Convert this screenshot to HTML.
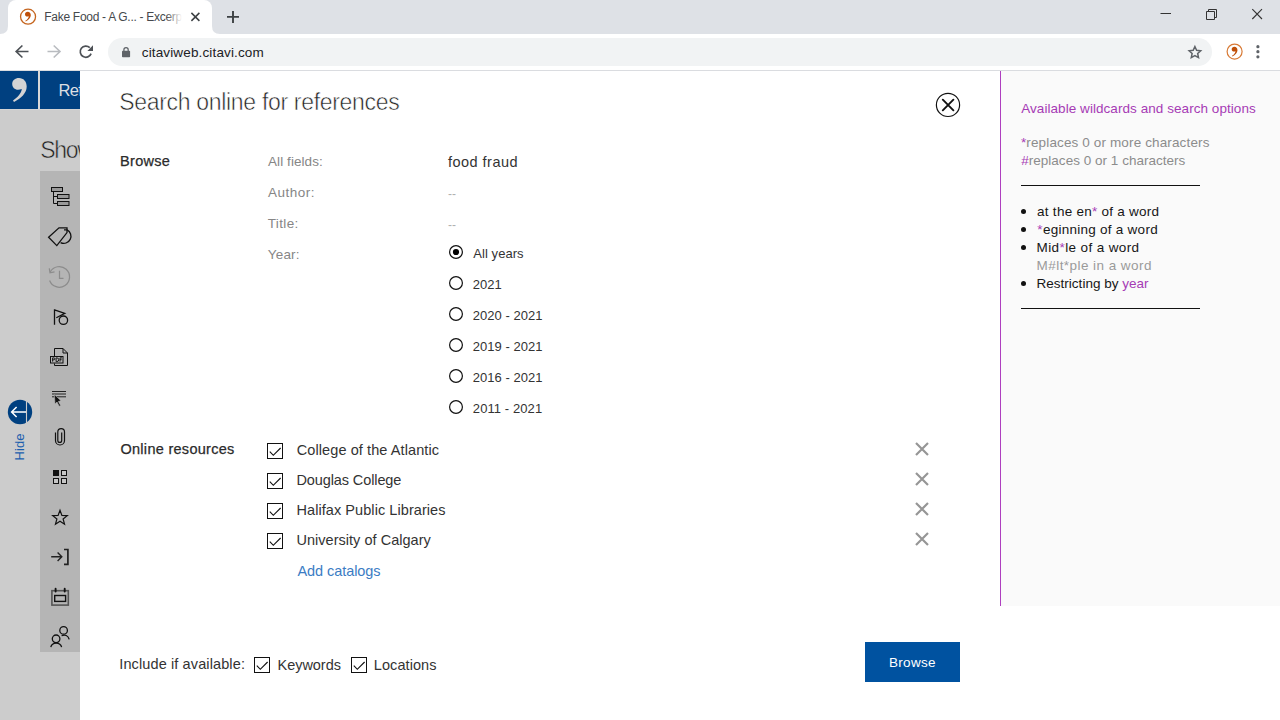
<!DOCTYPE html>
<html><head><meta charset="utf-8"><title>Search online for references</title>
<style>
*{box-sizing:border-box;margin:0;padding:0}
html,body{width:1280px;height:720px;overflow:hidden;background:#fff;font-family:"Liberation Sans",sans-serif;}
.t{position:absolute;white-space:nowrap;line-height:1}
.a{position:absolute}
svg{position:absolute;overflow:visible}
#tabbar{left:0;top:0;width:1280px;height:34px;background:#dee1e6}
#tab{left:8px;top:0;width:204px;height:34px;background:#fff;border-radius:8px 8px 0 0}
#toolbar{left:0;top:34px;width:1280px;height:36px;background:#fff}
#tbline{left:0;top:70px;width:1280px;height:1px;background:#dadce0}
#omni{left:108px;top:38px;width:1104px;height:28px;border-radius:14px;background:#f1f3f4}
#page{left:0;top:71px;width:1280px;height:649px;background:#cccccc}
#dialog{left:80px;top:71px;width:1200px;height:649px;background:#fff}
#rpanel{left:1000px;top:71px;width:280px;height:535px;background:#fafafa;border-left:1px solid #ae3fbf}
#side{left:40px;top:171px;width:40px;height:481px;background:#b5b5b5}
.blue{top:71px;height:38px;background:#004080}
.cb{width:16px;height:16px;border:1px solid #111;background:#fff}
.rd{width:14px;height:14px;border:1px solid #111;border-radius:50%;background:#fff}
.hr{height:1px;background:#111;left:1021px;width:179px}
.bul{width:5px;height:5px;border-radius:50%;background:#111;left:1021px}

</style></head><body>
<div class="a" id="tabbar"></div><div class="a" id="tab"></div>
<div class="a" id="toolbar"></div><div class="a" id="omni"></div><div class="a" id="tbline"></div>
<div class="a" id="page"></div>
<div class="a blue" style="left:0;width:38px"></div>
<div class="a blue" style="left:40px;width:40px"></div>
<div class="a" id="gapline" style="left:0;top:109px;width:80px;height:1px;background:#d4d4d4"></div>
<div class="a" style="left:38px;top:71px;width:2px;height:38px;background:#d8d8d8"></div>
<div class="a" id="side"></div>
<svg class="ov" width="80" height="720" viewBox="0 0 80 720" style="left:0;top:0">
<!-- big comma logo -->
<path id="bigcomma" d="M12.2 84 C12.2 80.5 15 78 19 78 C23.5 78 26.7 81.5 26.7 86.5 C26.7 93 21 98.5 14 102 L13 100.5 C17.5 97.5 21.3 93.5 21.8 89 C20.5 89.6 19.3 89.8 18 89.8 C14.8 89.8 12.2 87.3 12.2 84Z" fill="#d4d4d4"/>
<!-- hide button -->
<circle cx="20" cy="412" r="12.2" fill="#004080"/>
<path d="M26.5 399 V425" stroke="#cccccc" stroke-width="1.1"/>
<path d="M26 412 H11.8 M16.6 407 L11.6 412 L16.6 417" stroke="#fff" stroke-width="1.5" fill="none"/>
<!-- 1 tree -->
<g stroke="#111" stroke-width="1" fill="#999">
<rect x="51.5" y="187.5" width="11" height="4"/>
<rect x="57.5" y="194.5" width="11.5" height="4"/>
<rect x="57.5" y="201.5" width="11.5" height="4"/>
<path d="M53.5 191.5 V203.5 H57.5 M53.5 196.5 H57.5" fill="none"/>
</g>
<!-- 2 tag -->
<path d="M48.6 237.3 L59 227.8 H67 V232.6 L56.8 245.6 Z" stroke="#111" stroke-width="1.3" fill="none" stroke-linejoin="miter"/>
<path d="M64 229.8 H67 A6.9 6.9 0 1 1 60.6 242.6" stroke="#111" stroke-width="1.3" fill="none"/>
<!-- 3 history (disabled) -->
<g stroke="#8c8c8c" stroke-width="1.25" fill="none">
<path d="M50.2 272 A10.3 10.3 0 1 1 49.6 280.5"/>
<path d="M49.3 268.3 L50 272.8 L54.5 271.8"/>
<path d="M59.5 270.8 V278.3 H63.5"/>
</g>
<!-- 4 flag -->
<g stroke="#111" stroke-width="1.3" fill="none">
<path d="M54.5 309.3 V324.8 M54.5 309.8 L64.8 313.3 L56.3 317.8"/>
<circle cx="63.4" cy="320.2" r="4.2"/>
</g>
<!-- 5 pdf -->
<g stroke="#111" stroke-width="1" fill="none">
<path d="M54.5 356 V348.5 H63 L67.5 353 V365.5 H54.5 V363.5"/>
<path d="M63 348.5 V353 H67.5" />
<rect x="50.5" y="356.5" width="12.5" height="6.5" fill="#b5b5b5"/>
</g>
<path d="M52.6 361.6 V357.9 H53.9 a0.95 0.95 0 0 1 0 1.9 H52.6 M56.1 357.9 V361.6 H56.9 a1.85 1.85 0 0 0 0 -3.7 Z M60 361.6 V357.9 H62 M60 359.7 H61.6" stroke="#111" stroke-width="0.95" fill="none"/>
<!-- 6 lines + cursor -->
<g stroke="#111" stroke-width="1" fill="none">
<path d="M52 391.5 H66 M52 394 H66 M52 396.8 H66" stroke-width="0.9"/>
</g>
<path d="M54.4 394.6 L55 404 L57 402 L59.2 406.2 L60.6 405.4 L58.4 401.4 L61 400.8Z" fill="#111" stroke="#b5b5b5" stroke-width="0.6"/>
<!-- 7 paperclip -->
<path d="M61.7 432.6 V440.5 a1.95 1.95 0 0 1 -3.9 0 V432 a3.35 3.35 0 0 1 6.7 0 V440.5 a4.5 4.5 0 0 1 -9 0 V432.6" stroke="#111" stroke-width="1.2" fill="none"/>
<!-- 8 grid -->
<rect x="53" y="470" width="6" height="6" fill="#111"/>
<g stroke="#111" stroke-width="1" fill="#c6c6c6">
<rect x="61.5" y="470.5" width="5" height="5"/>
<rect x="53.5" y="478.5" width="5" height="5"/>
<rect x="61.5" y="478.5" width="5" height="5"/>
</g>
<!-- 9 star -->
<path d="M60 510.3 L61.9 515.4 L67.3 515.6 L63.1 519 L64.5 524.2 L60 521.2 L55.5 524.2 L56.9 519 L52.7 515.6 L58.1 515.4Z" stroke="#111" stroke-width="1.2" fill="none"/>
<!-- 10 arrow bracket -->
<g stroke="#222" stroke-width="1.3" fill="none">
<path d="M51.2 556.8 H61.6 M57.6 552.6 L61.8 556.8 L57.6 561" stroke-width="1.4"/>
<path d="M64 549.5 H67.9 V564.3 H64" stroke-width="1.7"/>
</g>
<!-- 11 calendar -->
<rect x="51.9" y="590.7" width="16.4" height="14.4" stroke="#555" stroke-width="1.6" fill="none"/>
<rect x="54.7" y="595.5" width="10.9" height="5.9" stroke="#111" stroke-width="1.4" fill="none"/>
<path d="M55.6 588.8 V591.6 M64.7 588.8 V591.6" stroke="#111" stroke-width="1.9" stroke-linecap="round"/>
<!-- 12 people -->
<g stroke="#111" stroke-width="1.3" fill="none">
<circle cx="63.6" cy="630.4" r="3.8"/>
<path d="M61.6 635.6 C65 634.3 68.2 635.4 69.2 639.4"/>
<circle cx="56.1" cy="638.8" r="3.8"/>
<path d="M50.8 647.2 C52 641.8 60.4 641.8 61.6 647.2"/>
</g>
</svg>
<div class="t" id="hide" style="left:0;top:0;font-size:13px;color:#1b5eae;transform-origin:0 0;transform:translate(24px,460.5px) rotate(-90deg);line-height:1;letter-spacing:0.1px"><span style="position:relative;top:-11.43px">Hide</span></div>

<div class="t" id="ref" style="left:58.60px;top:82.00px;font-size:16.5px;color:#dcdfe3;font-weight:400;letter-spacing:-0.700px;">Ref</div>
<div class="t" id="show" style="left:40.20px;top:139.00px;font-size:23px;color:#222;font-weight:400;letter-spacing:-1.300px;-webkit-text-stroke:0.55px #cccccc;">Show</div>
<div class="a" id="dialog"></div>
<div class="a" id="rpanel"></div>
<div class="a" id="btn" style="left:865px;top:642px;width:95px;height:40px;background:#0052a0"></div>
<!-- radios -->
<!-- checkboxes -->
<div class="a cb" style="left:267px;top:443px"></div>
<div class="a cb" style="left:267px;top:473px"></div>
<div class="a cb" style="left:267px;top:503px"></div>
<div class="a cb" style="left:267px;top:533px"></div>
<div class="a cb" style="left:254px;top:657px"></div>
<div class="a cb" style="left:351px;top:657px"></div>
<!-- hr & bullets -->
<div class="a hr" style="top:185px"></div>
<div class="a hr" style="top:308px"></div>
<div class="a bul" style="top:209px"></div>
<div class="a bul" style="top:227px"></div>
<div class="a bul" style="top:245px"></div>
<div class="a bul" style="top:281px"></div>

<svg class="ov" width="1280" height="720" viewBox="0 0 1280 720" style="left:0;top:0">
<!-- tab corner curves -->
<path d="M0 34 Q8 34 8 26 L8 34Z" fill="#fff"/>
<path d="M220 34 Q212 34 212 26 L212 34Z" fill="#fff"/>
<!-- favicon -->
<circle cx="28.05" cy="16.65" r="7.5" fill="#fff" stroke="#c5651f" stroke-width="1.3"/>
<path transform="translate(20.12,-19.4) scale(0.4)" d="M12.2 84 C12.2 80.5 15 78 19 78 C23.5 78 26.7 81.5 26.7 86.5 C26.7 93 21 98.5 14 102 L13 100.5 C17.5 97.5 21.3 93.5 21.8 89 C20.5 89.6 19.3 89.8 18 89.8 C14.8 89.8 12.2 87.3 12.2 84Z" fill="#bf4f08"/>
<!-- tab close -->
<path d="M191.4 12.9 L199.4 20.9 M199.4 12.9 L191.4 20.9" stroke="#3c4043" stroke-width="1.5" fill="none"/>
<!-- new tab plus -->
<path d="M227 16.9 H239 M233 10.9 V22.9" stroke="#3c4043" stroke-width="1.9" fill="none"/>
<!-- window controls -->
<path d="M1160.5 13.5 H1171" stroke="#333" stroke-width="1" fill="none"/>
<path d="M1206.5 11.5 H1214.5 V19.5 H1206.5Z M1208.5 11.5 V9.5 H1216.5 V17.5 H1214.5" stroke="#333" stroke-width="1" fill="none"/>
<path d="M1252.3 9.2 L1262 19 M1262 9.2 L1252.3 19" stroke="#333" stroke-width="1.1" fill="none"/>
<!-- back -->
<path d="M28.5 51.5 H16.4 M22.4 45.5 L16.2 51.5 L22.4 57.5" stroke="#4d5156" stroke-width="1.7" fill="none"/>
<!-- forward -->
<path d="M47.5 51.5 H59.8 M53.7 45.5 L60 51.5 L53.7 57.5" stroke="#b9bcc0" stroke-width="1.6" fill="none"/>
<!-- reload -->
<path d="M91.1 53.6 A5.6 5.6 0 1 1 89.8 47.7" stroke="#4d5156" stroke-width="1.7" fill="none"/>
<path d="M93 45.3 V50.9 H87.4Z" fill="#4d5156"/>
<!-- lock -->
<rect x="122" y="50.8" width="8.1" height="6.5" rx="0.8" fill="#5f6368"/>
<path d="M123.9 51 V49.7 a2.15 2.15 0 0 1 4.3 0 V51" stroke="#5f6368" stroke-width="1.25" fill="none"/>
<!-- star -->
<path d="M1194.90 46.50 L1196.60 50.25 L1200.70 50.71 L1197.66 53.50 L1198.49 57.54 L1194.90 55.50 L1191.31 57.54 L1192.14 53.50 L1189.10 50.71 L1193.20 50.25Z" stroke="#5f6368" stroke-width="1.5" fill="none" stroke-linejoin="miter"/>
<!-- extension icon -->
<circle cx="1234.6" cy="51.6" r="7.5" fill="#fff" stroke="#d87a35" stroke-width="1.2"/>
<path transform="translate(1226.8,15.6) scale(0.4)" d="M12.2 84 C12.2 80.5 15 78 19 78 C23.5 78 26.7 81.5 26.7 86.5 C26.7 93 21 98.5 14 102 L13 100.5 C17.5 97.5 21.3 93.5 21.8 89 C20.5 89.6 19.3 89.8 18 89.8 C14.8 89.8 12.2 87.3 12.2 84Z" fill="#bf4f08"/>
<!-- menu -->
<circle cx="1257.9" cy="46.7" r="1.6" fill="#5f6368"/><circle cx="1257.9" cy="51.7" r="1.6" fill="#5f6368"/><circle cx="1257.9" cy="56.8" r="1.6" fill="#5f6368"/>
</svg>

<svg class="ov" width="1280" height="720" viewBox="0 0 1280 720" style="left:0;top:0">
<!-- radios -->
<g stroke="#111" stroke-width="1.2" fill="#fff">
<circle cx="456" cy="252" r="6.4"/>
<circle cx="456" cy="283" r="6.4"/>
<circle cx="456" cy="314" r="6.4"/>
<circle cx="456" cy="345" r="6.4"/>
<circle cx="456" cy="376" r="6.4"/>
<circle cx="456" cy="407" r="6.4"/>
</g>
<circle cx="456" cy="252" r="3.1" fill="#000"/>
<!-- close circle -->
<circle cx="948" cy="104.9" r="11.6" fill="none" stroke="#111" stroke-width="1.2"/>
<path d="M942.8 99.7 L953.4 110.3 M953.4 99.7 L942.8 110.3" stroke="#111" stroke-width="1.9" stroke-linecap="round" fill="none"/>
<!-- remove X icons -->
<g stroke="#969696" stroke-width="2.2" fill="none">
<path d="M916 443 L928 455 M928 443 L916 455"/>
<path d="M916 473 L928 485 M928 473 L916 485"/>
<path d="M916 503 L928 515 M928 503 L916 515"/>
<path d="M916 533 L928 545 M928 533 L916 545"/>
</g>
<!-- check marks -->
<g stroke="#111" stroke-width="1.15" fill="none">
<path d="M269.8 451.6 L273.3 455.3 L280.6 448.0"/>
<path d="M269.8 481.6 L273.3 485.3 L280.6 478.0"/>
<path d="M269.8 511.6 L273.3 515.3 L280.6 508.0"/>
<path d="M269.8 541.6 L273.3 545.3 L280.6 538.0"/>
<path d="M256.8 665.6 L260.3 669.3 L267.6 662.0"/>
<path d="M353.8 665.6 L357.3 669.3 L364.6 662.0"/>
</g>
</svg>


<div class="t" id="tabtitle" style="left:44.25px;top:11.00px;font-size:12px;color:#45494d;font-weight:400;letter-spacing:-0.284px;">Fake Food - A G... - Excerp</div>
<div class="t" id="url" style="left:141.75px;top:46.00px;font-size:13.5px;color:#202124;font-weight:400;letter-spacing:0.144px;">citaviweb.citavi.com</div>
<div class="t" id="title" style="left:119.25px;top:91.00px;font-size:23px;color:#222;font-weight:400;letter-spacing:-0.315px;-webkit-text-stroke:0.55px #fff;">Search online for references</div>
<div class="t" id="browse" style="left:120.05px;top:154.00px;font-size:14.5px;color:#2b2b2b;font-weight:400;letter-spacing:0.290px;-webkit-text-stroke:0.25px #2b2b2b;">Browse</div>
<div class="t" id="allfields" style="left:268.00px;top:155.00px;font-size:13.5px;color:#868686;font-weight:400;letter-spacing:0.075px;">All fields:</div>
<div class="t" id="author" style="left:268.00px;top:186.00px;font-size:13.5px;color:#868686;font-weight:400;letter-spacing:0.500px;">Author:</div>
<div class="t" id="titlel" style="left:267.75px;top:217.00px;font-size:13.5px;color:#868686;font-weight:400;letter-spacing:0.350px;">Title:</div>
<div class="t" id="year" style="left:267.75px;top:248.00px;font-size:13.5px;color:#868686;font-weight:400;letter-spacing:0.188px;">Year:</div>
<div class="t" id="food" style="left:448.00px;top:155.00px;font-size:14.5px;color:#333;font-weight:400;letter-spacing:0.472px;">food fraud</div>
<div class="t" id="dash1" style="left:448.00px;top:188.00px;font-size:12px;color:#b0b0b0;font-weight:400;letter-spacing:0.000px;">--</div>
<div class="t" id="dash2" style="left:448.00px;top:219.00px;font-size:12px;color:#b0b0b0;font-weight:400;letter-spacing:0.000px;">--</div>
<div class="t" id="y0" style="left:473.35px;top:247.00px;font-size:13px;color:#333;font-weight:400;letter-spacing:0.051px;">All years</div>
<div class="t" id="y1" style="left:472.85px;top:278.00px;font-size:13px;color:#333;font-weight:400;letter-spacing:-0.033px;">2021</div>
<div class="t" id="y2" style="left:472.85px;top:309.00px;font-size:13px;color:#333;font-weight:400;letter-spacing:0.015px;">2020 - 2021</div>
<div class="t" id="y3" style="left:472.85px;top:340.00px;font-size:13px;color:#333;font-weight:400;letter-spacing:0.015px;">2019 - 2021</div>
<div class="t" id="y4" style="left:472.85px;top:371.00px;font-size:13px;color:#333;font-weight:400;letter-spacing:0.015px;">2016 - 2021</div>
<div class="t" id="y5" style="left:472.85px;top:402.00px;font-size:13px;color:#333;font-weight:400;letter-spacing:0.090px;">2011 - 2021</div>
<div class="t" id="online" style="left:120.45px;top:442.00px;font-size:14.5px;color:#2b2b2b;font-weight:400;letter-spacing:0.288px;-webkit-text-stroke:0.25px #2b2b2b;">Online resources</div>
<div class="t" id="r0" style="left:296.75px;top:443.00px;font-size:14.5px;color:#333;font-weight:400;letter-spacing:0.091px;">College of the Atlantic</div>
<div class="t" id="r1" style="left:296.50px;top:473.00px;font-size:14.5px;color:#333;font-weight:400;letter-spacing:-0.108px;">Douglas College</div>
<div class="t" id="r2" style="left:296.50px;top:503.00px;font-size:14.5px;color:#333;font-weight:400;letter-spacing:0.065px;">Halifax Public Libraries</div>
<div class="t" id="r3" style="left:296.50px;top:533.00px;font-size:14.5px;color:#333;font-weight:400;letter-spacing:0.025px;">University of Calgary</div>
<div class="t" id="addcat" style="left:297.50px;top:564.00px;font-size:14.5px;color:#3b7cc4;font-weight:400;letter-spacing:-0.068px;">Add catalogs</div>
<div class="t" id="incl" style="left:119.25px;top:657.00px;font-size:14.5px;color:#333;font-weight:400;letter-spacing:0.117px;">Include if available:</div>
<div class="t" id="kw" style="left:277.50px;top:658.00px;font-size:14.5px;color:#333;font-weight:400;letter-spacing:-0.035px;">Keywords</div>
<div class="t" id="loc" style="left:373.85px;top:658.00px;font-size:14.5px;color:#333;font-weight:400;letter-spacing:0.074px;">Locations</div>
<div class="t" id="browsebtn" style="left:889.00px;top:656.00px;font-size:13.5px;color:#fff;font-weight:400;letter-spacing:0.300px;">Browse</div>
<div class="t" id="avail" style="left:1021.20px;top:102.00px;font-size:13.5px;color:#a63bb5;font-weight:400;letter-spacing:0.059px;">Available wildcards and search options</div>
<div class="t" id="rep1" style="left:1020.95px;top:136.00px;font-size:13.5px;color:#8c8c8c;font-weight:400;letter-spacing:0.134px;"><span style="color:#a63bb5">*</span>replaces 0 or more characters</div>
<div class="t" id="rep2" style="left:1021.20px;top:154.00px;font-size:13.5px;color:#8c8c8c;font-weight:400;letter-spacing:0.023px;"><span style="color:#a63bb5">#</span>replaces 0 or 1 characters</div>
<div class="t" id="li1" style="left:1037.10px;top:205.00px;font-size:13.5px;color:#161616;font-weight:400;letter-spacing:0.257px;">at the en<span style="color:#a63bb5">*</span> of a word</div>
<div class="t" id="li2" style="left:1037.35px;top:223.00px;font-size:13.5px;color:#161616;font-weight:400;letter-spacing:0.262px;"><span style="color:#a63bb5">*</span>eginning of a word</div>
<div class="t" id="li3" style="left:1036.60px;top:241.00px;font-size:13.5px;color:#161616;font-weight:400;letter-spacing:0.380px;">Mid<span style="color:#a63bb5">*</span>le of a word</div>
<div class="t" id="li4" style="left:1036.60px;top:259.00px;font-size:13.5px;color:#9a9a9a;font-weight:400;letter-spacing:0.441px;">M#lt*ple in a word</div>
<div class="t" id="li5" style="left:1036.60px;top:277.00px;font-size:13.5px;color:#161616;font-weight:400;letter-spacing:0.004px;">Restricting by <span style="color:#a63bb5">year</span></div>
<div id="fadesvg" class="a" style="left:166px;top:5px;width:16px;height:24px;background:linear-gradient(to right,rgba(255,255,255,0),#fff)"></div>
<div id="fadesvg2" class="a" style="left:182px;top:5px;width:6px;height:24px;background:#fff"></div>

</body></html>
